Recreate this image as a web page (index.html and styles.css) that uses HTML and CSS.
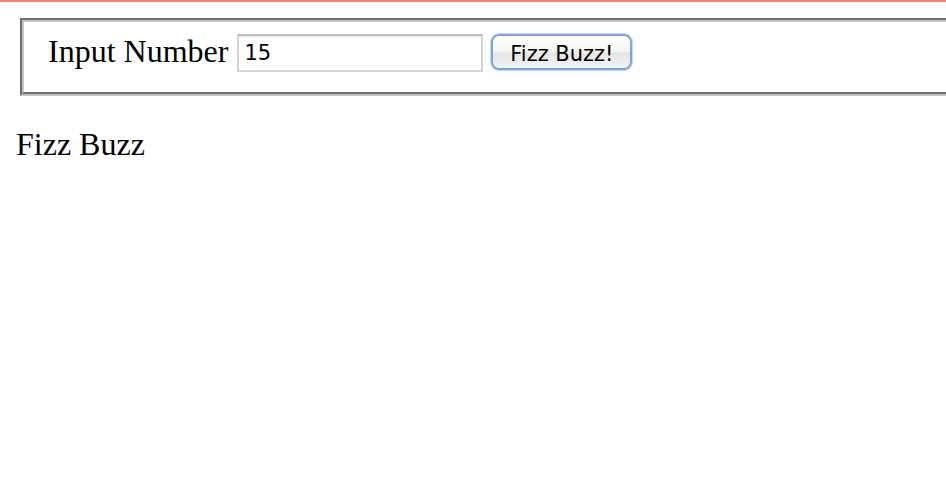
FILE: index.html
```html
<!DOCTYPE html>
<html>
<head>
<meta charset="utf-8">
<title>Fizz Buzz</title>
<link rel="stylesheet" href="styles.css">
</head>
<body>
<div class="panel">
  <div class="panel-inner">
    <span class="label">Input Number</span>
    <input class="num" type="text" value="15">
    <button class="btn" type="button">Fizz Buzz!</button>
  </div>
</div>
<div class="result">Fizz Buzz</div>
</body>
</html>
```
FILE: styles.css
```css
html {
  margin: 0;
  padding: 0;
  border-top: 2px solid #ee8274;
  background: #ffffff;
}
body {
  margin: 16px 0 0 16px;
  font-family: "Liberation Serif", "Times New Roman", serif;
  font-size: 32px;
  color: #000000;
}
.panel {
  margin: 0 0 0 4px;
  border-top: 2px solid #6e6e6e;
  border-left: 2px solid #6e6e6e;
  border-bottom: 2px solid #c2c2c2;
}
.panel-inner {
  display: flex;
  align-items: flex-start;
  border-top: 2px solid #c2c2c2;
  border-left: 2px solid #c2c2c2;
  border-bottom: 2px solid #6e6e6e;
  padding: 11px 24px 20px 24px;
}
.label {
  display: block;
  line-height: 36px;
  height: 39px;
  margin-right: 9px;
}
.num {
  box-sizing: border-box;
  width: 246px;
  height: 38px;
  margin: 1px 8px 0 0;
  padding: 0 5px;
  border: 2px solid #d4d4d4;
  border-top-color: #c0c0c0;
  border-radius: 0;
  box-shadow: inset 0 1px 1px #e6e6e6;
  font-family: "DejaVu Sans", "Verdana", sans-serif;
  font-size: 21px;
  color: #000000;
  background: #ffffff;
  outline: none;
}
.btn {
  box-sizing: border-box;
  width: 141px;
  height: 36px;
  margin-top: 1px;
  padding: 3px 0 0 0;
  border: 2px solid #79a7dc;
  border-radius: 8px;
  background: linear-gradient(#ffffff 0%, #f6f6f6 45%, #e6e6e6 55%, #f2f2f2 100%);
  box-shadow: 0 0 0 1px #c2d8f0;
  font-family: "DejaVu Sans", "Verdana", sans-serif;
  font-size: 21px;
  color: #000000;
  line-height: 26px;
}
.result {
  margin-top: 30px;
  line-height: 36px;
}
```
